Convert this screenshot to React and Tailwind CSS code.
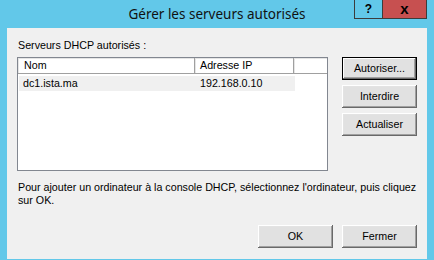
import React from "react";

const btn =
  "flex items-center justify-center w-[75px] h-[23px] bg-[#e1e1e1] text-black shadow-[inset_-1px_-1px_0_#696969,inset_1px_1px_0_#ffffff,inset_-2px_-2px_0_#a0a0a0,inset_2px_2px_0_#e3e3e3]";
const btnDefault =
  "flex items-center justify-center w-[75px] h-[23px] bg-[#e1e1e1] text-black border border-[#000] shadow-[inset_-1px_-1px_0_#696969,inset_1px_1px_0_#ffffff,inset_-2px_-2px_0_#a0a0a0]";

export default function App() {
  return (
    <div
      className="w-[434px] h-[260px] bg-[#62c8e9] flex flex-col overflow-hidden"
      style={{ fontFamily: '"Liberation Sans", Arial, sans-serif' }}
    >
      {/* Title bar */}
      <div className="relative h-[28px] shrink-0 flex items-center justify-center">
        <span
          className="text-[13.5px] text-[#111] leading-none pt-[1px]"
          style={{ fontFamily: '"Noto Sans", "Open Sans", sans-serif' }}
        >
          Gérer les serveurs autorisés
        </span>
        <div className="absolute right-[7px] top-0 flex h-[19px]">
          <div className="w-[28px] h-[19px] border border-t-0 border-r-0 border-[#3c3c3c] flex items-center justify-center text-[12px] font-bold text-black">
            ?
          </div>
          <div className="w-[45px] h-[19px] bg-[#c75050] border border-t-0 border-[#3c3c3c] flex items-center justify-center text-[15px] font-bold text-black leading-none pb-[2px]">
            x
          </div>
        </div>
      </div>

      {/* Client area */}
      <div className="mx-[7px] w-[420px] h-[231px] bg-[#f0f0f0] flex flex-col px-[10px] pt-[11px] text-[10.7px] text-black">
        <div className="h-[13px] leading-[13px] pl-[1px]">Serveurs DHCP autorisés :</div>
        <div className="flex mt-[5px]">
          {/* list view */}
          <div className="w-[311px] h-[114px] bg-white border border-[#828790] flex flex-col">
            <div className="flex h-[16px] leading-[15px] bg-white">
              <div className="w-[177px] pl-[6px] border-r border-b border-[#a0a0a0] shadow-[inset_1px_1px_0_#e5e5e5]">
                Nom
              </div>
              <div className="w-[99px] pl-[5px] border-r border-b border-[#a0a0a0] shadow-[inset_1px_1px_0_#e5e5e5]">
                Adresse IP
              </div>
              <div className="flex-1 border-b border-[#a0a0a0] shadow-[inset_1px_1px_0_#e5e5e5]"></div>
            </div>
            <div className="flex mt-[2px] ml-[1px] w-[276px] h-[15px] leading-[14px] bg-[#f0f0f0]">
              <div className="w-[177px] pl-[4px]">dc1.ista.ma</div>
              <div className="pl-[4px]">192.168.0.10</div>
            </div>
          </div>
          {/* side buttons */}
          <div className="ml-[14px] flex flex-col gap-[5px]">
            <div className={btnDefault}>Autoriser...</div>
            <div className={btn}>Interdire</div>
            <div className={btn}>Actualiser</div>
          </div>
        </div>
        <p className="mt-[10px] w-[400px] leading-[13px] pl-[1px]">
          Pour ajouter un ordinateur à la console DHCP, sélectionnez l'ordinateur, puis cliquez sur OK.
        </p>
        <div className="mt-auto mb-[11px] flex justify-end gap-[9px]">
          <div className={btn}>OK</div>
          <div className={btn}>Fermer</div>
        </div>
      </div>
    </div>
  );
}
